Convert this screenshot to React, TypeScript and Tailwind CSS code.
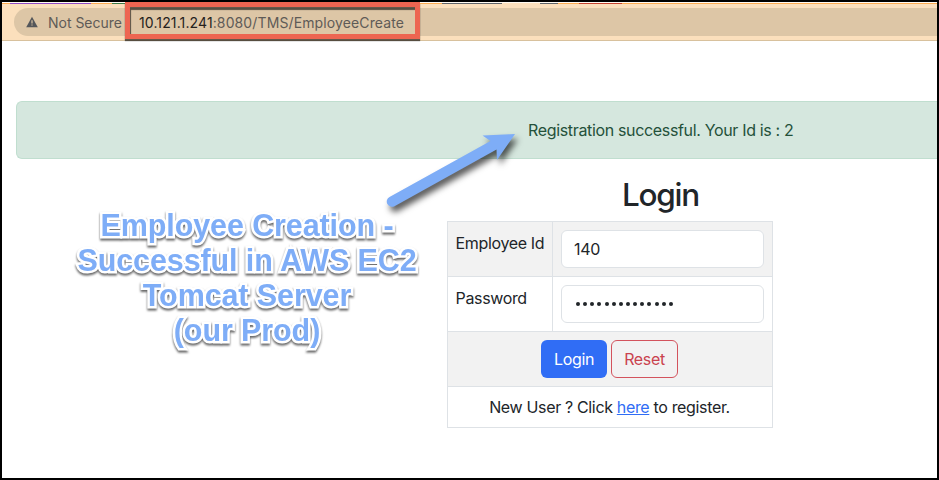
import type { ReactNode } from "react";

function AddressBar() {
  return (
    <header className="flex h-[39px] shrink-0 flex-col bg-[#fbdfbc]">
      <div className="h-px bg-[#fffaf2]" />
      <div className="flex h-px bg-[#fbab52]">
        <div className="ml-2 h-px w-[81px] bg-[#8f4bc4]" />
        <div className="ml-[21px] h-px w-[14px] bg-[#3d7a45]" />
        <div className="ml-[294px] h-px w-[22px] bg-[#fbab52]" />
        <div className="h-px w-[60px] bg-[#5f6368]" />
        <div className="h-px w-[38px] bg-[#fbdfbc]" />
        <div className="h-px w-[18px] bg-[#5f6368]" />
        <div className="ml-[21px] h-px w-[43px] bg-[#c5432f]" />
      </div>
      <div className="mt-1 ml-3 flex h-7 items-center rounded-l-full bg-[#ddc6a6] pl-3 font-['Inter','Liberation_Sans',sans-serif] text-[14px] text-[#5f5b57]">
        <svg viewBox="0 0 12 12" className="h-3 w-3 shrink-0">
          <path d="M6 .7 11.8 11.2H.2Z" fill="#54565a" />
          <path d="M5.4 4.2h1.2v3.4H5.4zM5.4 8.4h1.2v1.2H5.4z" fill="#ddc6a6" />
        </svg>
        <span className="ml-[10px] w-[91px] whitespace-nowrap tracking-[-0.02px]">Not Secure</span>
        <span className="whitespace-nowrap tracking-[0.12px]">
          <span className="text-[#25211d]">10.121.1.241</span>:8080/TMS/EmployeeCreate
        </span>
      </div>
      <div className="mt-1 h-px shrink-0 bg-[#d8c19d]" />
    </header>
  );
}

function Field({ label, children, shaded }: { label: string; children: ReactNode; shaded?: boolean }) {
  return (
    <div className={shaded ? "flex h-[55px] border-b border-[#dee2e6] bg-[#f2f2f2]" : "flex h-[55px] border-b border-[#dee2e6]"}>
      <div className="w-[105px] whitespace-nowrap border-r border-[#dee2e6] pt-[9px] pl-[7.5px] leading-6">{label}</div>
      <div className="flex-1 p-2">
        <div className="flex h-[38px] items-center rounded-md border border-[#dee2e6] bg-white px-3">{children}</div>
      </div>
    </div>
  );
}

function LoginForm() {
  return (
    <section className="ml-[445px] w-[326px]">
      <h1 className="h-[62px] pt-[14px] pl-[101px] text-center text-[31.5px] leading-[44px] font-[550] tracking-[-1.25px]">
        Login
      </h1>
      <div className="border border-[#dee2e6]">
        <Field label="Employee Id" shaded>140</Field>
        <Field label="Password">
          <span className="flex gap-[3.15px] pl-[2px]">
            {Array.from({ length: 14 }, (_, i) => (
              <span key={i} className="size-[4px] rounded-full bg-[#212529]" />
            ))}
          </span>
        </Field>
        <div className="flex h-[55px] gap-1 border-b border-[#dee2e6] bg-[#f2f2f2] pt-2 pl-[93px]">
          <button className="h-[38px] w-[66px] rounded-md bg-[#306df5] text-white">Login</button>
          <button className="h-[38px] w-[67px] rounded-md border border-[#d3535d] text-[#ca424e]">Reset</button>
        </div>
        <p className="h-10 pr-px text-center leading-10 whitespace-nowrap">
          New User ? Click <a href="#" className="text-[#306df5] underline">here</a> to register.
        </p>
      </div>
    </section>
  );
}

function Annotations() {
  return (
    <>
      <div className="absolute top-0 left-[123px] h-[37px] w-[295px] border-5 border-[#ed6551] shadow-[0_2px_1px_rgba(0,0,0,0.6),inset_1px_3px_1px_rgba(0,0,0,0.6)]" />
      <svg className="absolute top-[108px] left-[368px] h-[120px] w-[170px] overflow-visible drop-shadow-[3px_5px_3px_rgba(0,0,0,0.65)]" viewBox="370 110 170 120">
        <path d="M515 134 482.5 135.5 490.5 141 389.5 197A5.2 5.2 0 0 0 394.5 206.2L496.5 149.5 497 160Z" fill="#7eadf7" />
      </svg>
      <div className="absolute top-[206px] left-[45px] w-[400px] text-center font-['Liberation_Sans',Arial,sans-serif] text-[30.5px] leading-[35px] font-bold tracking-[-0.1px] whitespace-nowrap text-[#7eadf7] drop-shadow-[0_2px_1px_rgba(0,0,0,0.6)] [-webkit-text-stroke:5px_white] [paint-order:stroke_fill] [stroke-linejoin:round]">
        <div>Employee Creation -</div>
        <div>Successful in AWS EC2</div>
        <div>Tomcat Server</div>
        <div>(our Prod)</div>
      </div>
    </>
  );
}

export default function App() {
  return (
    <div className="relative flex h-[480px] w-[939px] flex-col overflow-hidden border-2 border-black bg-white font-['Inter','Liberation_Sans',sans-serif] text-[16px] tracking-[-0.34px] text-[#212529]">
      <AddressBar />
      <div className="mt-[60px] ml-[14px] h-[58px] shrink-0 rounded-l-md border border-r-0 border-[#c0decf] bg-[#d5e7de] pl-[511px] leading-[57px] whitespace-nowrap text-[#24513a]">
        Registration successful. Your Id is : 2
      </div>
      <LoginForm />
      <Annotations />
    </div>
  );
}
